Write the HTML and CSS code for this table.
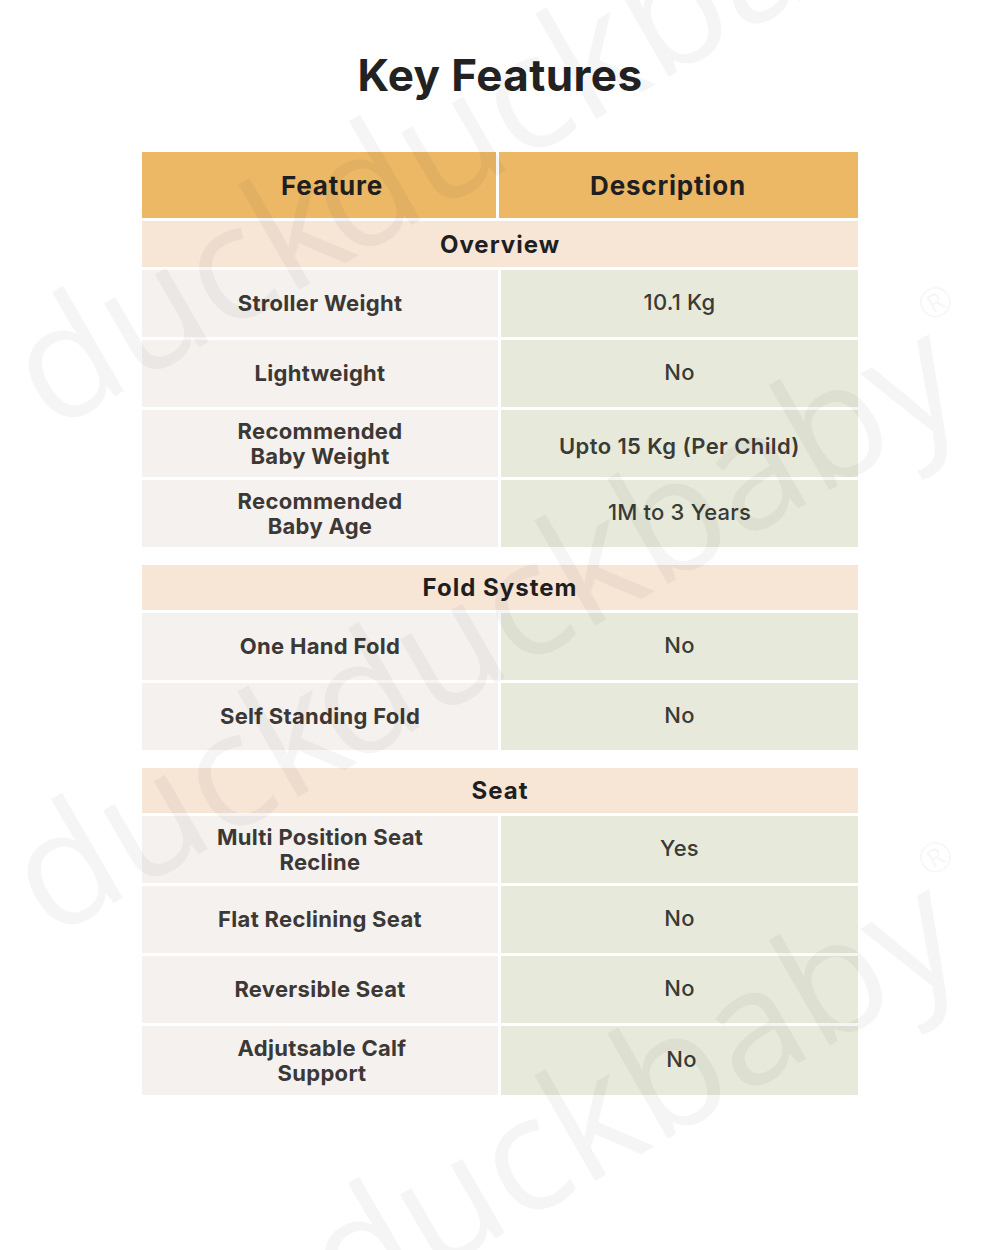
FILE: index.html
```html
<!DOCTYPE html>
<html lang="en">
<head>
<meta charset="utf-8">
<title>Key Features</title>
<link rel="stylesheet" href="styles.css">
</head>
<body>
<main class="page">
  <h1 class="title">Key Features</h1>
  <div class="table">
    <div class="head">
      <div class="head-cell head-feat">Feature</div>
      <div class="head-cell head-desc">Description</div>
    </div>

    <section class="group">
      <div class="section-title">Overview</div>
      <div class="row"><div class="cell feat">Stroller Weight</div><div class="cell desc">10.1 Kg</div></div>
      <div class="row"><div class="cell feat">Lightweight</div><div class="cell desc">No</div></div>
      <div class="row"><div class="cell feat">Recommended<br>Baby Weight</div><div class="cell desc strong">Upto 15 Kg (Per Child)</div></div>
      <div class="row"><div class="cell feat">Recommended<br>Baby Age</div><div class="cell desc">1M to 3 Years</div></div>
    </section>

    <section class="group">
      <div class="section-title">Fold System</div>
      <div class="row"><div class="cell feat">One Hand Fold</div><div class="cell desc">No</div></div>
      <div class="row"><div class="cell feat">Self Standing Fold</div><div class="cell desc">No</div></div>
    </section>

    <section class="group">
      <div class="section-title">Seat</div>
      <div class="row"><div class="cell feat">Multi Position Seat<br>Recline</div><div class="cell desc">Yes</div></div>
      <div class="row"><div class="cell feat">Flat Reclining Seat</div><div class="cell desc">No</div></div>
      <div class="row"><div class="cell feat">Reversible Seat</div><div class="cell desc">No</div></div>
      <div class="row row-tall"><div class="cell feat shift">Adjutsable Calf<br>Support</div><div class="cell desc shift">No</div></div>
    </section>
  </div>
</main>

<svg class="watermark" width="1000" height="1250" viewBox="0 0 1000 1250" aria-hidden="true">
  <g class="wm">
    <text x="51" y="433" transform="rotate(-30 51 433)">duck</text>
    <text x="348" y="262" transform="rotate(-30 348 262)">duckbaby<tspan class="reg" dx="4" dy="-95">®</tspan></text>
    <text x="50" y="940" transform="rotate(-30 50 940)">duck</text>
    <text x="347" y="769" transform="rotate(-30 347 769)">duckbaby<tspan class="reg" dx="4" dy="-95">®</tspan></text>
    <text x="347" y="1324" transform="rotate(-30 347 1324)">duckbaby<tspan class="reg" dx="4" dy="-95">®</tspan></text>
  </g>
</svg>
</body>
</html>
```

FILE: styles.css
```css
html, body {
  margin: 0;
  padding: 0;
  background: #ffffff;
}

body {
  position: relative;
  width: 1000px;
  height: 1250px;
  overflow: hidden;
  font-family: "Inter", "Open Sans", sans-serif;
  color: #3a3633;
}

.page {
  width: 716px;
  margin: 0 auto;
}

.title {
  margin: 0;
  padding-top: 49px;
  height: 53px;
  line-height: 53px;
  font-size: 44px;
  font-weight: 700;
  color: #222222;
  text-align: center;
  letter-spacing: 0.4px;
}

.table {
  margin-top: 50px;
  display: flex;
  flex-direction: column;
  gap: 3px;
}

.head {
  display: grid;
  grid-template-columns: 354px 359px;
  gap: 3px;
  height: 66px;
}

.head-cell {
  background: #ecb866;
  display: flex;
  align-items: center;
  justify-content: center;
  font-size: 26px;
  font-weight: 700;
  letter-spacing: 0.8px;
  color: #1f1f1f;
}

.head-feat {
  padding-left: 26px;
}

.head-desc {
  padding-right: 21px;
}

.group {
  display: flex;
  flex-direction: column;
  gap: 3px;
}

.group + .group {
  margin-top: 15px;
}

.section-title {
  height: 45px;
  background: #f7e5d6;
  display: flex;
  align-items: center;
  justify-content: center;
  font-size: 24px;
  font-weight: 700;
  letter-spacing: 1px;
  color: #1f1f1f;
}

.group:first-of-type .section-title {
  height: 46px;
}

.row {
  display: grid;
  grid-template-columns: 356px 357px;
  gap: 3px;
  height: 67px;
}

.row-tall {
  height: 69px;
}

.cell {
  display: flex;
  align-items: center;
  justify-content: center;
  text-align: center;
  font-size: 22px;
  line-height: 25px;
}

.feat {
  background: #f4f1ee;
  font-weight: 700;
  letter-spacing: 0.3px;
  color: #3b3835;
}

.desc {
  background: #e7eada;
  font-weight: 500;
  letter-spacing: 0.2px;
  color: #3a3a37;
  padding-bottom: 2px;
}

.desc.strong {
  font-weight: 600;
  letter-spacing: 0.4px;
  padding-bottom: 0;
  padding-top: 6px;
}

.shift {
  padding-left: 4px;
}

.watermark {
  position: absolute;
  top: 0;
  left: 0;
  pointer-events: none;
}

.wm text {
  font-family: "Open Sans", "Noto Sans", sans-serif;
  font-size: 160px;
  font-weight: 400;
  fill: rgba(0, 0, 0, 0.04);
}

.wm .reg {
  font-size: 42px;
}
```
